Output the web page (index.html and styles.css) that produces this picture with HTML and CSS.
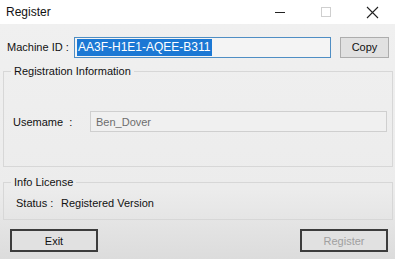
FILE: index.html
```html
<!DOCTYPE html>
<html lang="en">
<head>
  <meta charset="utf-8">
  <title>Register</title>
  <link rel="stylesheet" href="styles.css">
</head>
<body>

  <div class="window">
    <div class="titlebar">
      <span class="title">Register</span>
      <div class="caption-buttons">
        <span class="cap-btn">
          <svg width="12" height="12" viewBox="0 0 12 12"><path d="M1 6.5h10" stroke="#222" stroke-width="1"/></svg>
        </span>
        <span class="cap-btn">
          <svg width="12" height="12" viewBox="0 0 12 12"><rect x="1.5" y="1.5" width="9" height="9" fill="none" stroke="#cfcfcf" stroke-width="1"/></svg>
        </span>
        <span class="cap-btn">
          <svg width="13" height="13" viewBox="0 0 13 13"><path d="M1 1l11 11M12 1L1 12" stroke="#222" stroke-width="1.1"/></svg>
        </span>
      </div>
    </div>

    <div class="content">
      <div class="id-row">
        <span class="label">Machine ID :</span>
        <div class="textbox focused"><span class="selected">AA3F-H1E1-AQEE-B311</span></div>
        <button class="button copy">Copy</button>
      </div>

      <fieldset class="group reg-group">
        <legend>Registration Information</legend>
        <div class="user-row">
          <span class="label">Usemame&nbsp; :</span>
          <div class="textbox disabled">Ben_Dover</div>
        </div>
      </fieldset>

      <fieldset class="group info-group">
        <legend>Info License</legend>
        <div class="status-row">
          <span class="label">Status :</span>
          <span class="status">Registered Version</span>
        </div>
      </fieldset>

      <div class="bottom-row">
        <button class="button default">Exit</button>
        <button class="button default" disabled>Register</button>
      </div>
    </div>
  </div>

</body>
</html>
```

FILE: styles.css
```css
body {
  margin: 0;
  padding: 0;
  font-family: "Liberation Sans", Arial, sans-serif;
  font-size: 11px;
  color: #111;
  background-color: #f0f0f0;
}

.window {
  width: 395px;
  height: 259px;
  overflow: hidden;
  display: flex;
  flex-direction: column;
}

/* barre de titre */
.titlebar {
  height: 24px;
  flex-shrink: 0;
  background-color: #ffffff;
  display: flex;
  align-items: center;
  justify-content: space-between;
}

.title {
  padding-left: 6px;
  font-size: 12px;
  color: #111;
}

.caption-buttons {
  display: flex;
  height: 100%;
}

.cap-btn {
  width: 46px;
  display: flex;
  align-items: center;
  justify-content: center;
}

.content {
  flex: 1;
  background: linear-gradient(#f0f0f0 0%, #ececec 70%, #dcdcdc 100%);
  display: flex;
  flex-direction: column;
}

.label {
  white-space: nowrap;
}

.id-row {
  display: flex;
  align-items: center;
  height: 22px;
  margin-top: 12px;
  padding-left: 7px;
}

.id-row .label {
  width: 67px;
  flex-shrink: 0;
}

.textbox {
  box-sizing: border-box;
  height: 21px;
  border: 1px solid #c4c4c4;
  display: flex;
  align-items: center;
  padding-left: 2px;
  white-space: nowrap;
  flex-shrink: 0;
}

.textbox.focused {
  width: 257px;
  font-size: 12px;
  background-color: #f4f4f4;
  border-color: #4f8ec4;
}

.selected {
  background-color: #1b78d4;
  color: #ffffff;
  line-height: 17px;
  padding: 0 1px;
}

.textbox.disabled {
  width: 297px;
  background-color: #f0f0f0;
  border-color: #cfcfcf;
  color: #6d6d6d;
  padding-left: 5px;
}

.button {
  box-sizing: border-box;
  font-family: "Liberation Sans", Arial, sans-serif;
  font-size: 11px;
  color: #111;
  background-color: #e1e1e1;
  border: 1px solid #adadad;
  padding: 0;
  cursor: pointer;
}

.button.copy {
  width: 49px;
  height: 21px;
  margin-left: 9px;
}

.group {
  border: 1px solid #d7d7d7;
  margin: 0 2px 0 3px;
  padding: 0;
  min-width: 0;
}

.group legend {
  margin-left: 7px;
  padding: 0 3px;
  line-height: 14px;
}

.reg-group {
  margin-top: 6px;
  height: 101px;
}

.user-row {
  display: flex;
  align-items: center;
  padding-left: 9px;
  margin-top: 33px;
}

.user-row .label {
  width: 77px;
}

.info-group {
  margin-top: 8px;
  height: 43px;
}

.status-row {
  display: flex;
  align-items: center;
  padding-left: 12px;
  margin-top: 8px;
}

.status-row .label {
  width: 45px;
}

.bottom-row {
  display: flex;
  justify-content: space-between;
  padding: 0 7px 0 10px;
  margin-top: 9px;
}

.button.default {
  width: 88px;
  height: 23px;
  border: 2px solid #3c3c3c;
  background-color: #e1e1e1;
}

.button.default:disabled {
  color: #a0a0a0;
  cursor: default;
}
```
